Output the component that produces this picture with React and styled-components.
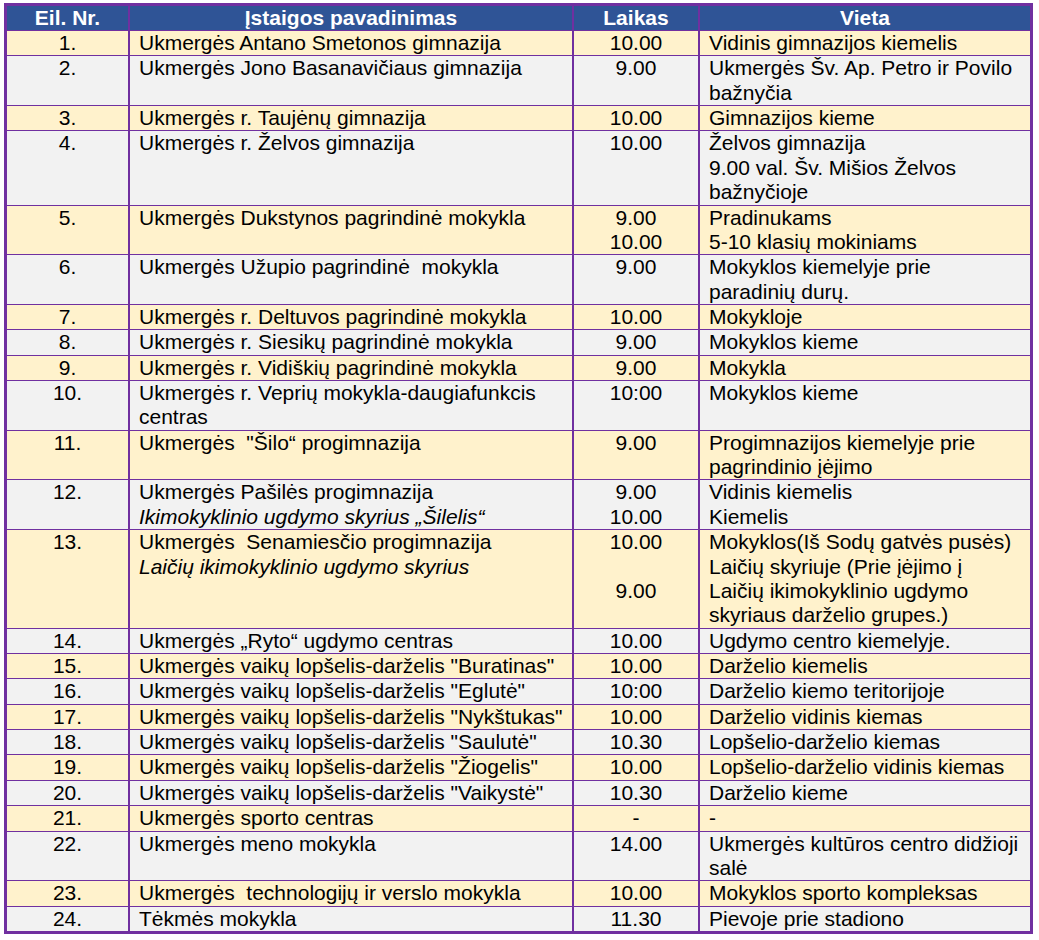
import React from "react";
import styled, { createGlobalStyle } from "styled-components";

const GlobalStyle = createGlobalStyle`
  html, body {
    margin: 0;
    padding: 0;
    background: #ffffff;
  }
`;

const PURPLE = "#7030A0";
const YELLOW = "#FFF2CC";
const GRAY = "#F2F2F2";
const BLUE = "#2F5496";

const Page = styled.div`
  padding: 3px 0 0 4px;
`;

const Table = styled.div`
  display: grid;
  grid-template-columns: 123px 444px 126px 330px;
  width: 1029px;
  box-sizing: border-box;
  border: 3px solid ${PURPLE};
  font-family: "Liberation Sans", Arial, sans-serif;
  font-size: 21px;
  line-height: 24.36px;
  color: #000;
`;

const HeaderCell = styled.div`
  box-sizing: border-box;
  height: 25px;
  line-height: 24px;
  background: ${BLUE};
  color: #ffffff;
  font-weight: bold;
  text-align: center;
  white-space: pre;
  border-bottom: 1px solid ${PURPLE};
  border-right: ${(p) => (p.$last ? "none" : `2px solid ${PURPLE}`)};
`;

const Cell = styled.div`
  box-sizing: border-box;
  background: ${(p) => (p.$odd ? YELLOW : GRAY)};
  text-align: ${(p) => (p.$center ? "center" : "left")};
  padding: 0 ${(p) => (p.$center ? "0" : "4px")} 0 ${(p) => (p.$center ? "0" : "9px")};
  border-right: ${(p) => (p.$last ? "none" : `2px solid ${PURPLE}`)};
  border-bottom: ${(p) => (p.$lastRow ? "none" : `1px solid ${PURPLE}`)};
  overflow: hidden;
`;

const Line = styled.div`
  white-space: pre;
  min-height: 24.36px;
  font-style: ${(p) => (p.$italic ? "italic" : "normal")};
`;

const rows = [
  ["1.", ["Ukmergės Antano Smetonos gimnazija"], ["10.00"], ["Vidinis gimnazijos kiemelis"]],
  ["2.", ["Ukmergės Jono Basanavičiaus gimnazija"], ["9.00"], ["Ukmergės Šv. Ap. Petro ir Povilo", "bažnyčia"]],
  ["3.", ["Ukmergės r. Taujėnų gimnazija"], ["10.00"], ["Gimnazijos kieme"]],
  ["4.", ["Ukmergės r. Želvos gimnazija"], ["10.00"], ["Želvos gimnazija", "9.00 val. Šv. Mišios Želvos", "bažnyčioje"]],
  ["5.", ["Ukmergės Dukstynos pagrindinė mokykla"], ["9.00", "10.00"], ["Pradinukams", "5-10 klasių mokiniams"]],
  ["6.", ["Ukmergės Užupio pagrindinė  mokykla"], ["9.00"], ["Mokyklos kiemelyje prie", "paradinių durų."]],
  ["7.", ["Ukmergės r. Deltuvos pagrindinė mokykla"], ["10.00"], ["Mokykloje"]],
  ["8.", ["Ukmergės r. Siesikų pagrindinė mokykla"], ["9.00"], ["Mokyklos kieme"]],
  ["9.", ["Ukmergės r. Vidiškių pagrindinė mokykla"], ["9.00"], ["Mokykla"]],
  ["10.", ["Ukmergės r. Veprių mokykla-daugiafunkcis", "centras"], ["10:00"], ["Mokyklos kieme"]],
  ["11.", ["Ukmergės  \"Šilo“ progimnazija"], ["9.00"], ["Progimnazijos kiemelyje prie", "pagrindinio įėjimo"]],
  [
    "12.",
    ["Ukmergės Pašilės progimnazija", { t: "Ikimokyklinio ugdymo skyrius „Šilelis“", i: true }],
    ["9.00", "10.00"],
    ["Vidinis kiemelis", "Kiemelis"],
  ],
  [
    "13.",
    ["Ukmergės  Senamiesčio progimnazija", { t: "Laičių ikimokyklinio ugdymo skyrius", i: true }],
    ["10.00", "", "9.00"],
    [
      "Mokyklos(Iš Sodų gatvės pusės)",
      "Laičių skyriuje (Prie įėjimo į",
      "Laičių ikimokyklinio ugdymo",
      "skyriaus darželio grupes.)",
    ],
  ],
  ["14.", ["Ukmergės „Ryto“ ugdymo centras"], ["10.00"], ["Ugdymo centro kiemelyje."]],
  ["15.", ["Ukmergės vaikų lopšelis-darželis \"Buratinas\""], ["10.00"], ["Darželio kiemelis"]],
  ["16.", ["Ukmergės vaikų lopšelis-darželis \"Eglutė\""], ["10:00"], ["Darželio kiemo teritorijoje"]],
  ["17.", ["Ukmergės vaikų lopšelis-darželis \"Nykštukas\""], ["10.00"], ["Darželio vidinis kiemas"]],
  ["18.", ["Ukmergės vaikų lopšelis-darželis \"Saulutė\""], ["10.30"], ["Lopšelio-darželio kiemas"]],
  ["19.", ["Ukmergės vaikų lopšelis-darželis \"Žiogelis\""], ["10.00"], ["Lopšelio-darželio vidinis kiemas"]],
  ["20.", ["Ukmergės vaikų lopšelis-darželis \"Vaikystė\""], ["10.30"], ["Darželio kieme"]],
  ["21.", ["Ukmergės sporto centras"], ["-"], ["-"]],
  ["22.", ["Ukmergės meno mokykla"], ["14.00"], ["Ukmergės kultūros centro didžioji", "salė"]],
  ["23.", ["Ukmergės  technologijų ir verslo mokykla"], ["10.00"], ["Mokyklos sporto kompleksas"]],
  ["24.", ["Tėkmės mokykla"], ["11.30"], ["Pievoje prie stadiono"]],
];

const headers = ["Eil. Nr.", "Įstaigos pavadinimas", "Laikas", "Vieta"];

function Lines({ items }) {
  return items.map((it, k) => {
    const text = typeof it === "string" ? it : it.t;
    const italic = typeof it === "string" ? false : it.i;
    return (
      <Line key={k} $italic={italic}>
        {text}
      </Line>
    );
  });
}

export default function App() {
  return (
    <Page>
      <GlobalStyle />
      <Table>
        {headers.map((h, i) => (
          <HeaderCell key={h} $last={i === headers.length - 1}>
            {h}
          </HeaderCell>
        ))}
        {rows.map((r, idx) => {
          const odd = idx % 2 === 0;
          const lastRow = idx === rows.length - 1;
          return (
            <React.Fragment key={r[0]}>
              <Cell $odd={odd} $center $lastRow={lastRow}>
                <Line>{r[0]}</Line>
              </Cell>
              <Cell $odd={odd} $lastRow={lastRow}>
                <Lines items={r[1]} />
              </Cell>
              <Cell $odd={odd} $center $lastRow={lastRow}>
                <Lines items={r[2]} />
              </Cell>
              <Cell $odd={odd} $last $lastRow={lastRow}>
                <Lines items={r[3]} />
              </Cell>
            </React.Fragment>
          );
        })}
      </Table>
    </Page>
  );
}
